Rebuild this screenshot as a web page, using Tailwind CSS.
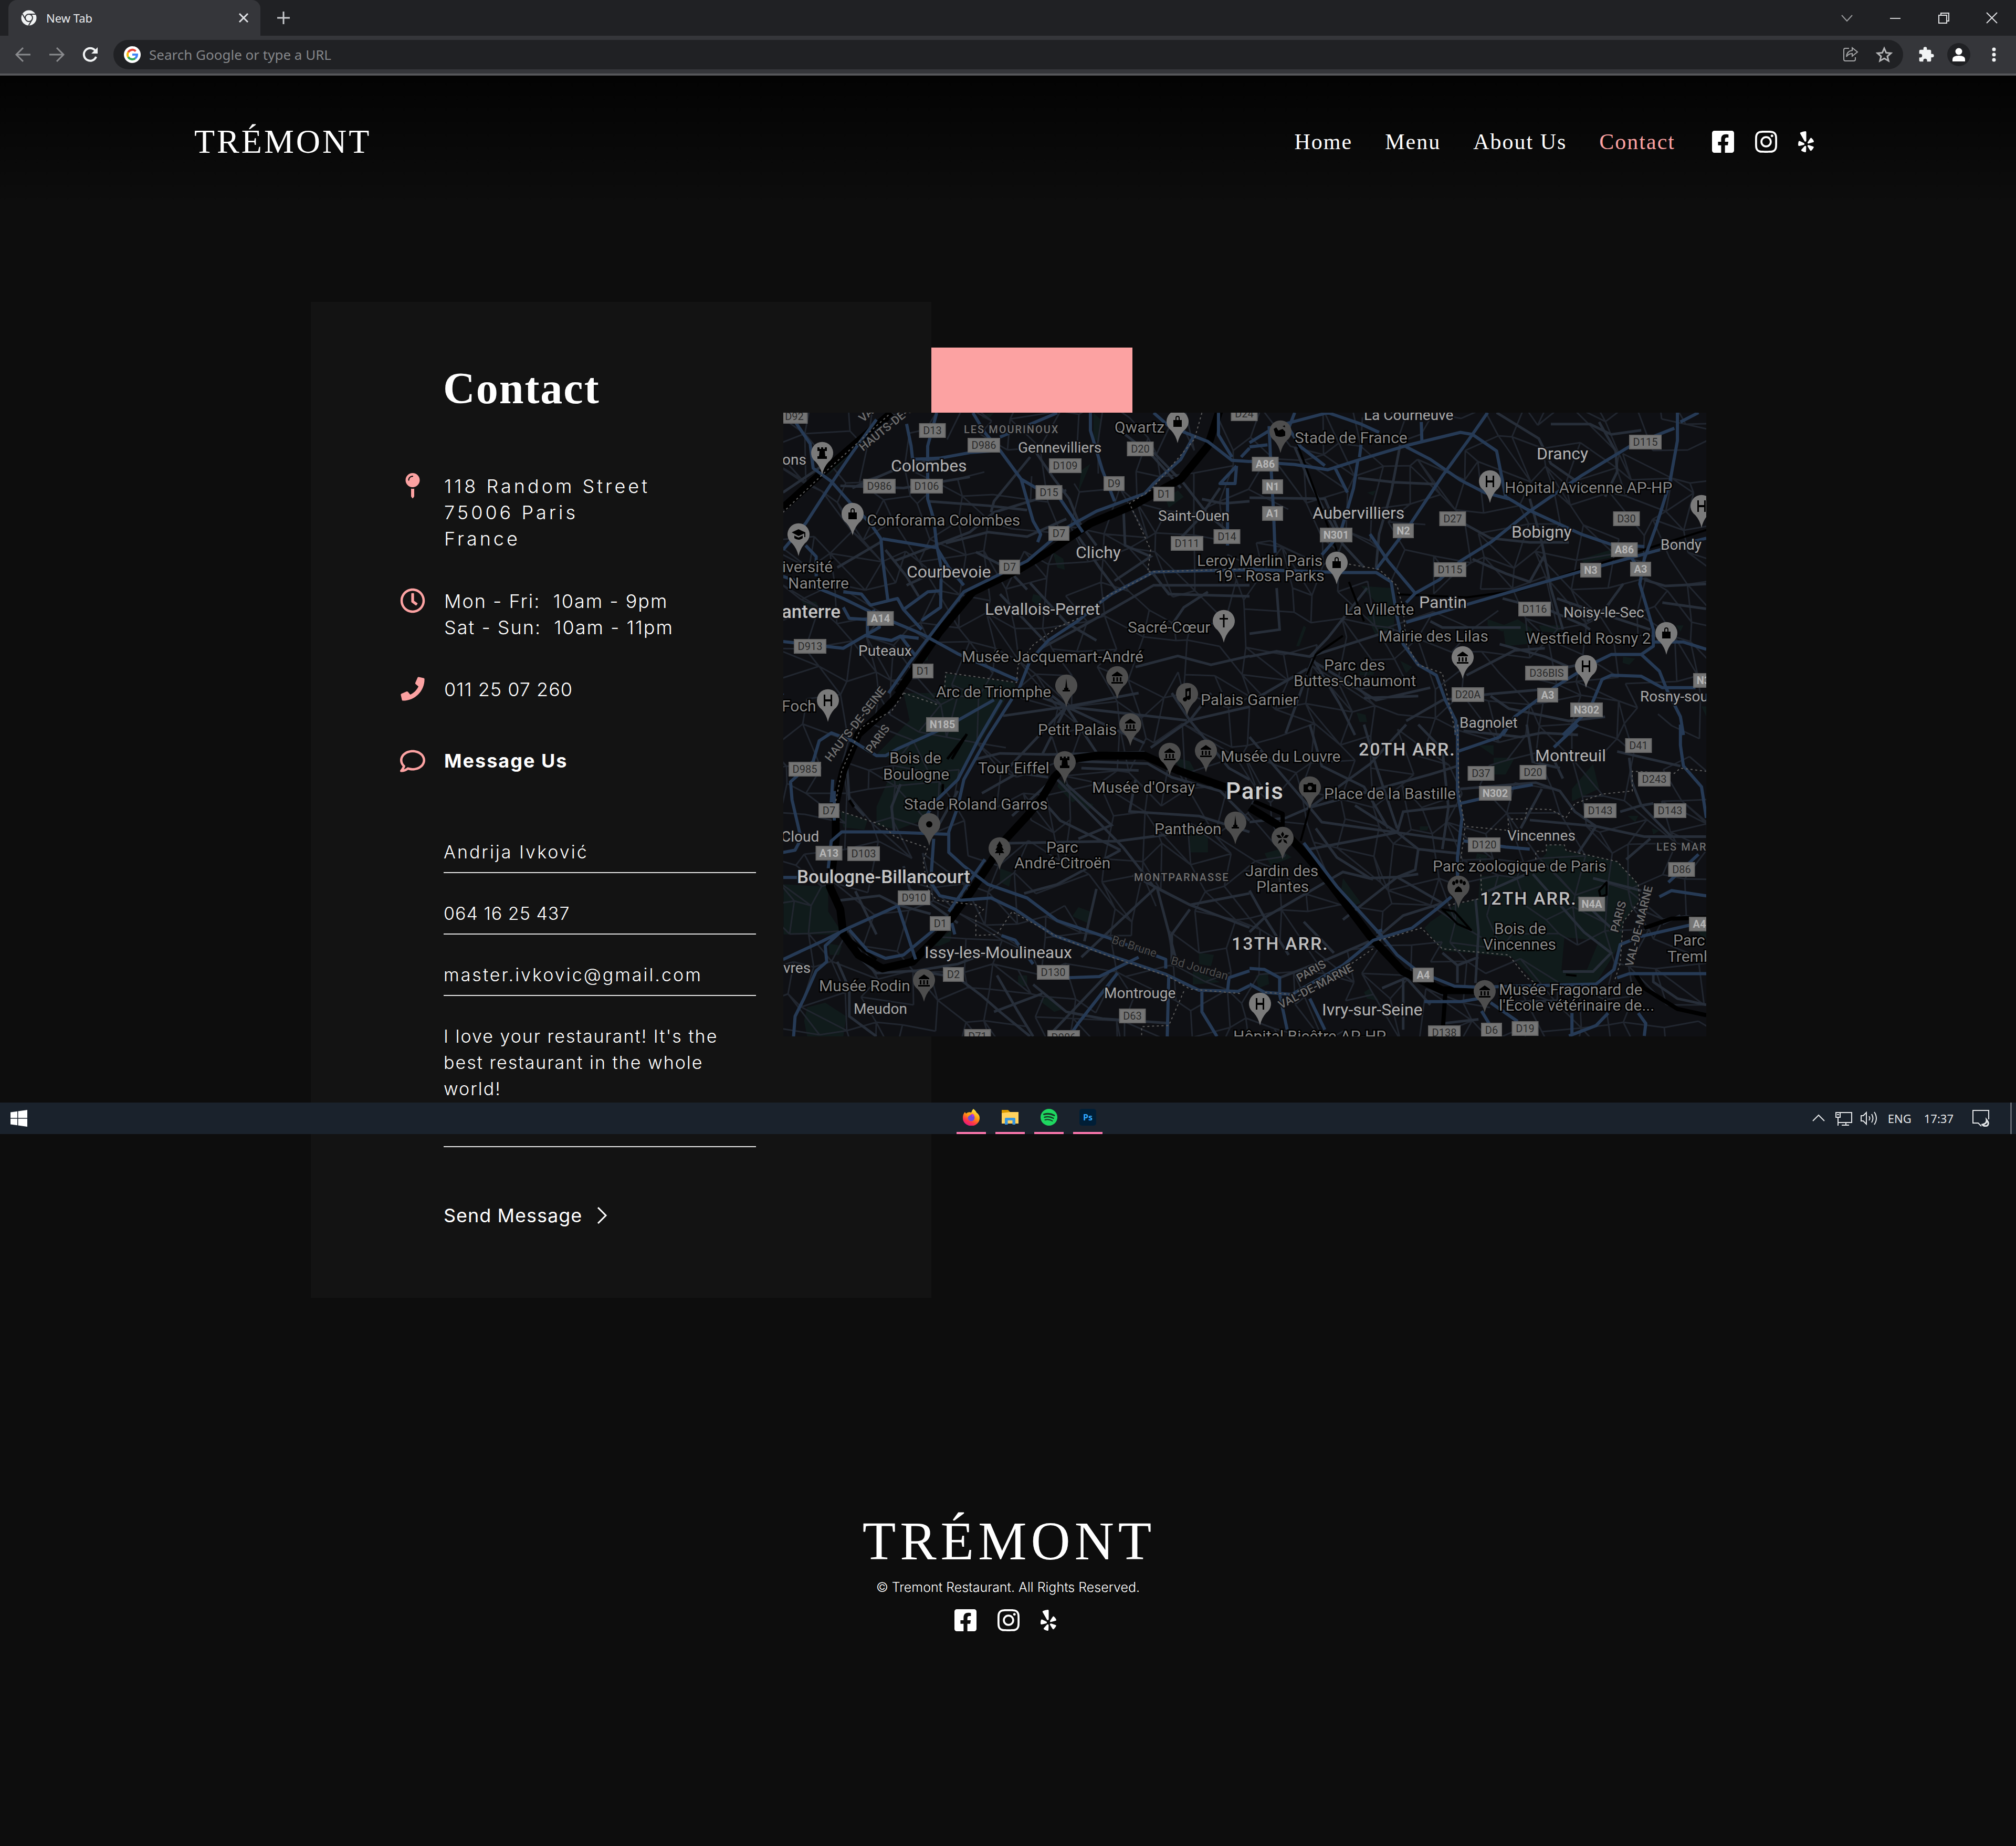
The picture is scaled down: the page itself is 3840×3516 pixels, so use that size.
<!DOCTYPE html>
<html lang="en">
<head>
<meta charset="utf-8">
<meta name="viewport" content="width=device-width, initial-scale=1">
<title>Trémont – Contact</title>
<script src="https://cdn.jsdelivr.net/npm/@tailwindcss/browser@4"></script>
</head>
<body class="relative min-h-screen bg-[#0d0d0d] text-white font-['Inter',sans-serif]">

<!-- shared icons -->
<svg class="hidden" aria-hidden="true">
  <symbol id="facebook" viewBox="0 32 448 448"><path d="M400 32H48A48 48 0 0 0 0 80v352a48 48 0 0 0 48 48h137.25V327.69h-63V256h63v-54.64c0-62.15 37-96.48 93.67-96.48 27.14 0 55.52 4.84 55.52 4.84v61h-31.27c-30.81 0-40.42 19.12-40.42 38.73V256h68.78l-11 71.69h-57.78V480H400a48 48 0 0 0 48-48V80a48 48 0 0 0-48-48z"/></symbol>
  <symbol id="instagram" viewBox="0 32 448 448"><path d="M224.1 141c-63.6 0-114.9 51.3-114.9 114.9s51.3 114.9 114.9 114.9S339 319.5 339 255.9 287.7 141 224.1 141zm0 189.6c-41.1 0-74.7-33.5-74.7-74.7s33.5-74.7 74.7-74.7 74.7 33.5 74.7 74.7-33.6 74.7-74.7 74.7zm146.4-194.3c0 14.9-12 26.8-26.8 26.8-14.9 0-26.8-12-26.8-26.8s12-26.8 26.8-26.8 26.8 12 26.8 26.8zm76.1 27.2c-1.7-35.9-9.9-67.7-36.2-93.9-26.2-26.2-58-34.4-93.9-36.2-37-2.1-147.9-2.1-184.9 0-35.8 1.7-67.6 9.9-93.9 36.1s-34.4 58-36.2 93.9c-2.1 37-2.1 147.9 0 184.9 1.7 35.9 9.9 67.7 36.2 93.9s58 34.4 93.9 36.2c37 2.1 147.9 2.1 184.9 0 35.9-1.7 67.7-9.9 93.9-36.2 26.2-26.2 34.4-58 36.2-93.9 2.1-37 2.1-147.8 0-184.8zM398.8 388c-7.8 19.6-22.9 34.7-42.6 42.6-29.5 11.7-99.5 9-132.1 9s-102.7 2.6-132.1-9c-19.6-7.8-34.7-22.9-42.6-42.6-11.7-29.5-9-99.5-9-132.1s-2.6-102.7 9-132.1c7.8-19.6 22.9-34.7 42.6-42.6 29.5-11.7 99.5-9 132.1-9s102.7-2.6 132.1 9c19.6 7.8 34.7 22.9 42.6 42.6 11.7 29.5 9 99.5 9 132.1s2.7 102.7-9 132.1z"/></symbol>
  <symbol id="yelp" viewBox="0 0 384 512"><path d="M42.9 240.32l99.62 48.61c19.2 9.4 16.2 37.51-4.5 42.71L30.5 358.45a22.79 22.79 0 0 1-28.21-19.6 197.16 197.16 0 0 1 9-85.32 22.8 22.8 0 0 1 31.61-13.21zm44 239.25a199.45 199.45 0 0 0 79.42 32.11A22.78 22.78 0 0 0 192.94 490l3.9-110.82c.7-21.3-25.5-31.91-39.81-16.1l-74.21 82.4a22.82 22.82 0 0 0 4.09 34.09zm145.34-109.92l58.81 94a22.93 22.93 0 0 0 34 5.5 198.36 198.36 0 0 0 52.71-67.61A23 23 0 0 0 364.17 370l-105.42-34.26c-20.31-6.5-37.81 15.8-26.51 33.91zm148.33-132.23a197.44 197.44 0 0 0-50.41-69.31 22.85 22.85 0 0 0-34 4.4l-62 91.92c-11.9 17.7 4.7 40.61 25.2 34.71L366 268.63a23 23 0 0 0 14.61-31.21zM62.11 30.18a22.86 22.86 0 0 0-9.9 32l104.12 180.44c11.7 20.2 42.61 11.9 42.61-11.4V22.88a22.67 22.67 0 0 0-24.5-22.8 320.37 320.37 0 0 0-112.33 30.1z"/></symbol>
</svg>

<!-- browser frame -->
<div class="font-['Noto_Sans',sans-serif] border-b-4 border-[#56575a] bg-[#35363a]">
  <div class="flex h-[68px] items-center bg-[#202124]">
    <div class="ml-4 flex h-full w-[480px] items-center rounded-t-[16px] bg-[#35363a] pl-6 pr-5">
      <svg class="h-[30px] w-[30px]" viewBox="0 0 30 30"><circle cx="15" cy="15" r="14.500" fill="#f1f3f4"/><g stroke="#35363a" stroke-width="2" fill="none"><circle cx="15" cy="15" r="7"/><path d="M15 8H28M9 18.500L2.500 7.500M21 18.500L14.500 29.500"/></g></svg>
      <span class="ml-[18px] text-[22px] leading-8 text-[#e8eaed]">New Tab</span>
      <button class="ml-auto" aria-label="Close tab"><svg class="h-6 w-6" viewBox="0 0 24 24" stroke="#dfe1e5" stroke-width="3"><path d="M4 4L20 20M20 4L4 20"/></svg></button>
    </div>
    <button class="ml-[30px]" aria-label="New tab"><svg class="h-7 w-7" viewBox="0 0 28 28" stroke="#c8cacd" stroke-width="3"><path d="M14 2V26M2 14H26"/></svg></button>
    <div class="ml-auto flex items-center gap-[68px] pr-[34px]">
      <button aria-label="Search tabs"><svg class="h-6 w-6" viewBox="0 0 24 24" fill="none" stroke="#9a9b9d" stroke-width="2"><path d="M2 7L12 18L22 7"/></svg></button>
      <button aria-label="Minimize"><svg class="h-6 w-6" viewBox="0 0 24 24" stroke="#cfd0d2" stroke-width="2"><path d="M2 13H22"/></svg></button>
      <button aria-label="Restore"><svg class="h-6 w-6" viewBox="0 0 24 24" fill="none" stroke="#e0e1e3" stroke-width="2"><path d="M3 7H18V22H3ZM7 7V3H22V18H18"/></svg></button>
      <button aria-label="Close window"><svg class="h-6 w-6" viewBox="0 0 24 24" stroke="#e0e1e3" stroke-width="2"><path d="M2 2L22 22M22 2L2 22"/></svg></button>
    </div>
  </div>
  <div class="flex h-[72px] items-center pl-7 pr-[23px]">
    <button aria-label="Back"><svg class="h-8 w-8" viewBox="0 0 32 32" fill="none" stroke="#8a8b8e" stroke-width="3"><path d="M30 16H4M16 3L3 16L16 29"/></svg></button>
    <button class="ml-8" aria-label="Forward"><svg class="h-8 w-8" viewBox="0 0 32 32" fill="none" stroke="#8a8b8e" stroke-width="3"><path d="M2 16H28M16 3L29 16L16 29"/></svg></button>
    <button class="ml-8" aria-label="Reload"><svg class="h-8 w-8" viewBox="0 0 32 32" fill="none" stroke="#f1f3f4" stroke-width="4"><path d="M27 20A12 12 0 1 1 25 8"/><path d="M30 2V14H18Z" fill="#f1f3f4" stroke="none"/></svg></button>
    <div class="ml-7 flex h-14 flex-1 items-center rounded-full bg-[#202124] pl-5 pr-5">
      <svg class="h-8 w-8 shrink-0" viewBox="0 0 32 32" fill="none" stroke-width="4"><circle cx="16" cy="16" r="16" fill="#fff"/><path d="M22.500 9.500A9 9 0 0 0 8.200 11.500" stroke="#ea4335"/><path d="M8.200 11.500A9 9 0 0 0 8.200 20.500" stroke="#fbbc05"/><path d="M8.200 20.500A9 9 0 0 0 21.500 23.100" stroke="#34a853"/><path d="M21.500 23.100A9 9 0 0 0 25 16H16" stroke="#4285f4"/></svg>
      <input class="ml-4 min-w-0 flex-1 bg-transparent text-[26px] leading-9 text-[#e8eaed] placeholder-[#85878a] outline-none" type="text" aria-label="Address" placeholder="Search Google or type a URL">
      <button aria-label="Share"><svg class="h-8 w-8" viewBox="0 0 32 32" fill="none" stroke="#a5a6a8" stroke-width="2"><path d="M13 4H6Q3 4 3 7V25Q3 28 6 28H22Q25 28 25 25V21"/><path d="M19 3L29 11L19 19V14Q12 14 8 20Q9 9 19 8Z"/></svg></button>
      <button class="ml-8" aria-label="Bookmark"><svg class="h-8 w-8" viewBox="0 0 32 32" fill="none" stroke="#b4b5b7" stroke-width="3"><path d="M16 4L19.700 12.500L29 13.200L22 19.300L24.200 28L16 23.300L7.800 28L10 19.300L3 13.200L12.300 12.500Z"/></svg></button>
    </div>
    <button class="ml-7" aria-label="Extensions"><svg class="h-8 w-8" viewBox="0 0 24 24" fill="#f1f3f4"><path d="M20.500 11H19V7a2 2 0 0 0-2-2h-4V3.500a2.500 2.500 0 0 0-5 0V5H4a2 2 0 0 0-2 2v3.800h1.500a2.700 2.700 0 0 1 0 5.400H2V20a2 2 0 0 0 2 2h3.800v-1.500a2.700 2.700 0 0 1 5.400 0V22H17a2 2 0 0 0 2-2v-4h1.500a2.500 2.500 0 0 0 0-5z"/></svg></button>
    <button class="ml-6" aria-label="Profile"><svg class="h-11 w-11" viewBox="0 0 44 44" fill="#fff"><circle cx="22" cy="22" r="22" fill="#202124"/><circle cx="22" cy="16" r="6.500"/><path d="M10 35V31Q10 24 22 24T34 31V35Z"/></svg></button>
    <button class="ml-8" aria-label="Browser menu"><svg class="h-8 w-8" viewBox="0 0 32 32" fill="#f1f3f4"><circle cx="13" cy="6" r="3.500"/><circle cx="13" cy="16" r="3.500"/><circle cx="13" cy="26" r="3.500"/></svg></button>
  </div>
</div>

<!-- site -->
<div class="bg-linear-to-b from-black/80 to-transparent to-[250px]">
  <header class="flex items-center justify-between pb-[273px] pl-[370px] pr-[385px] pt-[94px] font-['Liberation_Serif',serif]">
    <a href="#" class="text-[64px] leading-[64px] tracking-[4px]">TRÉMONT</a>
    <nav class="flex items-center gap-[62px] text-[42px] leading-10 tracking-[2px]">
      <a href="#">Home</a>
      <a href="#">Menu</a>
      <a href="#">About Us</a>
      <a href="#" class="text-[#fca2a2]">Contact</a>
      <div class="ml-2 flex items-center gap-10">
        <a href="#" aria-label="Facebook"><svg class="size-[42px] fill-white"><use href="#facebook"/></svg></a>
        <a href="#" aria-label="Instagram"><svg class="size-[42px] fill-white"><use href="#instagram"/></svg></a>
        <a href="#" aria-label="Yelp"><svg class="h-10 w-[30px] fill-white"><use href="#yelp"/></svg></a>
      </div>
    </nav>
  </header>

  <main class="grid grid-cols-[592fr_900fr_282fr_1476fr_590fr]">
    <section class="col-span-2 col-start-2 row-start-1 min-w-0 bg-[#131313] pb-[132px] pl-[170px] pt-[123px]">
      <h1 class="pl-[82px] font-['Liberation_Serif',serif] text-[84px] font-bold leading-[84px] tracking-[2px]">Contact</h1>
      <div class="mt-[119px] flex flex-col text-[36px] font-light leading-[50px]">
        <div class="flex gap-9">
          <svg class="h-12 w-12 fill-[#fca2a2]" viewBox="-112 0 512 512"><path d="M112 316.940v156.690l22.020 33.020c4.750 7.120 15.220 7.120 19.970 0L176 473.630V316.940c-10.390 1.920-21.060 3.060-32 3.060s-21.610-1.140-32-3.060zM144 0C64.470 0 0 64.470 0 144s64.470 144 144 144 144-64.470 144-144S223.530 0 144 0zm0 76c-37.500 0-68 30.500-68 68 0 6.620-5.380 12-12 12s-12-5.380-12-12c0-50.730 41.280-92 92-92 6.620 0 12 5.380 12 12s-5.380 12-12 12z"/></svg>
          <address class="not-italic tracking-[5px]">118 Random Street<br>75006 Paris<br>France</address>
        </div>
        <div class="mt-[69px] flex gap-9">
          <svg class="h-12 w-12 fill-[#fca2a2]" viewBox="0 0 512 512"><path d="M256 8C119 8 8 119 8 256s111 248 248 248 248-111 248-248S393 8 256 8zm0 448c-110.500 0-200-89.500-200-200S145.500 56 256 56s200 89.500 200 200-89.500 200-200 200zm61.800-104.400l-84.900-61.700c-3.100-2.300-4.900-5.900-4.900-9.700V116c0-6.600 5.400-12 12-12h32c6.600 0 12 5.400 12 12v141.700l66.800 48.600c5.400 3.900 6.500 11.400 2.600 16.800L334.600 349c-3.900 5.300-11.400 6.500-16.800 2.600z"/></svg>
          <p class="whitespace-pre tracking-[2px]">Mon - Fri:  10am - 9pm
Sat - Sun:  10am - 11pm</p>
        </div>
        <div class="mt-[68px] flex gap-9">
          <svg class="h-12 w-12 fill-[#fca2a2]" viewBox="-16 -16 544 544"><path d="M493.400 24.600l-104-24c-11.300-2.600-22.900 3.300-27.500 13.900l-48 112c-4.200 9.800-1.400 21.300 6.900 28l60.600 49.600c-36 76.700-98.900 140.500-177.200 177.200l-49.600-60.600c-6.800-8.300-18.200-11.100-28-6.900l-112 48C3.900 366.500-2 378.100.6 389.400l24 104C27.100 504.200 36.700 512 48 512c256.100 0 464-207.500 464-464 0-11.200-7.700-20.900-18.600-23.400z"/></svg>
          <a href="tel:0112507260" class="tracking-[1px]">011 25 07 260</a>
        </div>
        <div class="mt-[86px] flex gap-9">
          <svg class="h-12 w-12 fill-[#fca2a2]" viewBox="0 -16 512 512"><path d="M256 32C114.600 32 0 125.100 0 240c0 47.600 19.900 91.200 52.900 126.300C38 405.700 7 439.100 6.500 439.500c-6.600 7-8.400 17.200-4.600 26S14.400 480 24 480c61.500 0 110-25.700 139.100-46.300C192 442.800 223.200 448 256 448c141.400 0 256-93.100 256-208S397.400 32 256 32zm0 368c-26.700 0-53.100-4.100-78.400-12.100l-22.700-7.200-19.500 13.800c-14.300 10.100-33.900 21.400-57.500 29 7.300-12.100 14.400-25.700 19.900-40.200l10.600-28.100-20.600-21.800C69.700 314.100 48 282.200 48 240c0-88.200 93.300-160 208-160s208 71.800 208 160-93.300 160-208 160z"/></svg>
          <h2 class="font-bold tracking-[2px]">Message Us</h2>
        </div>
      </div>
      <form class="ml-[83px] mt-[124px] flex max-w-[595px] flex-col text-[34px] font-light leading-[50px]">
        <input class="mb-[52px] w-full border-b-2 border-[#e6e6e6] bg-transparent pb-[13px] tracking-[3px] outline-none" type="text" aria-label="Name" value="Andrija Ivković">
        <input class="mb-[52px] w-full border-b-2 border-[#e6e6e6] bg-transparent pb-[13px] tracking-[1px] outline-none" type="tel" aria-label="Phone" value="064 16 25 437">
        <input class="mb-[52px] w-full border-b-2 border-[#e6e6e6] bg-transparent pb-[13px] tracking-[3px] outline-none" type="email" aria-label="Email" value="master.ivkovic@gmail.com">
        <textarea class="h-[236px] w-full resize-none overflow-hidden border-b-2 border-[#e6e6e6] bg-transparent pr-16 tracking-[2px] outline-none" aria-label="Message">I love your restaurant! It's the best restaurant in the whole world!</textarea>
        <button type="button" class="mt-[105px] flex items-center gap-7 self-start text-[36px] font-normal leading-[50px] tracking-[1px]">Send Message
          <svg class="h-8 w-5" viewBox="0 0 20 32" fill="none" stroke="#fff" stroke-width="3"><path d="M2 1L17 16L2 31"/></svg></button>
      </form>
    </section>

    <div class="col-span-2 col-start-3 row-start-1 mt-[87px] min-w-0">
      <div class="ml-[282px] h-[124px] w-[383px] bg-[#fca2a2]"></div>
      <svg id="map" class="block w-full bg-[#0f1014]" viewBox="0 0 1758 1188" role="img" aria-label="Map of Paris">
        <g id="parks" class="fill-[#101b1b]">
          <g transform="translate(-12 -126) scale(.574 .421)"><path d="M1050 300L1075 330L1070 430L1050 420ZM380 310L320 360L160 590L180 570ZM80 1150L130 1155L160 1230L100 1190ZM1290 690L1330 650L1350 680L1300 730ZM915 930L950 960L955 1010L930 1000ZM560 1480L790 1520L790 1568L550 1568ZM1010 560L1040 530L1000 660ZM850 1120L880 1130L870 1180L845 1150ZM480 1380L500 1360L500 1420L470 1430ZM680 310L720 300L700 330L680 325Z"/></g>
          <g transform="translate(888 -6) scale(.574 .3954)"><path d="M370 850L470 860L480 990L480 1050L420 1090L390 1000L420 930ZM840 1040L890 1010L940 1060L920 1130L850 1140ZM960 1040L1030 1040L1030 1075L970 1070ZM1100 720L1200 675L1210 710L1110 740ZM500 1210L540 1240L520 1270ZM155 1140L180 1040L188 1050L165 1140ZM355 1460L385 1470L390 1505L365 1505ZM790 1010L850 1040L840 1070L790 1040ZM390 400L420 390L410 415ZM1240 1190L1280 1200L1260 1230L1238 1220ZM370 1240L420 1250L410 1280L365 1280ZM1415 1040L1440 1040L1430 1070ZM1500 1430L1516 1430L1516 1480Z"/></g>
          <g transform="translate(-12 534) scale(.574 .4337)"><path d="M420 0L770 0L600 380L530 470L480 560L400 600L330 580L330 500L370 380L410 300L330 270L360 230L440 120ZM210 520L300 560L290 600L220 590ZM22 840L170 850L170 960L220 1060L22 1060ZM100 1380L160 1360L230 1420L220 1508L100 1508L90 1440ZM1370 610L1430 620L1430 700L1370 700ZM940 380L1010 460L980 480L930 410ZM990 450L1050 490L1030 520ZM740 770L780 790L770 850L740 830ZM1000 940L1040 960L1030 1010L980 980ZM800 1240L830 1240L830 1290L800 1280ZM580 1040L575 1090L540 1110L510 1110ZM170 1100L215 1110L205 1150L175 1150ZM1310 280L1370 300L1390 350L1350 350ZM1380 1210L1470 1270L1380 1280ZM1400 1140L1450 1150L1440 1200L1400 1190ZM870 1350L910 1330L945 1390L920 1400Z"/></g>
          <g transform="translate(888 594) scale(.574 .3954)"><path d="M985 580L1040 580L1050 610L1220 660L1290 770L1290 850L1240 950L1230 1060L1150 1245L950 1245L870 1120L740 1100L640 1090L580 980L600 950L680 870L760 840L765 730L920 720L985 620ZM1140 190L1160 310L1070 370L1070 310ZM810 160L880 160L850 240L810 240ZM50 620L100 600L140 640L70 680ZM310 740L370 860L350 870L305 790ZM380 1290L400 1270L430 1330L390 1320ZM760 100L810 100L810 150ZM20 1210L60 1190L65 1250L30 1270ZM565 490L595 490L590 510L565 510ZM1255 440L1290 440L1280 470ZM1335 500L1360 510L1340 530ZM755 620L790 630L785 660L750 650ZM1480 940L1516 960L1516 1060L1490 1000Z"/><path class="fill-[#0f1014]" d="M1045 1025L1160 1040L1120 1180L1035 1185Z"/></g>
        </g>
        <path id="streets" class="fill-none stroke-[#21262f] stroke-[3px]"/>
        <g class="fill-none stroke-[#272e39] stroke-[5px] [&_path]:[vector-effect:non-scaling-stroke]">
          <g transform="translate(-12 -126) scale(.574 .421)"><path d="M20 660L150 540M210 630L420 640L640 590M250 640L420 540L560 500M500 700L700 720L830 740M560 890L700 840L830 860L960 780M390 970L640 840L720 750L960 650M200 1000L300 920L350 880M360 920L430 1040L470 1130M430 1080L540 1010M1150 740L1155 900L1240 950L1120 1060M1000 860L1070 1000L1130 1110M840 1070L960 1250L1060 1330M1568 1080L1250 1080L1020 1260L870 1370M1250 1030L1300 1120L1568 1130M1430 1110L1350 1180L1310 1260M1190 1450L1330 1400L1440 1440L1568 1400M740 1120L900 1350M660 930L760 1000L830 1100M1250 480L1350 620L1430 760L1490 830M860 480L920 600L970 690L1000 790L1060 900M1568 700L1480 710L1410 690M1330 880L1400 780L1470 640M840 500L720 700L710 750M1340 640L1250 500L1120 360"/></g>
          <g transform="translate(888 -6) scale(.574 .3954)"><path d="M150 180L200 350L260 520L310 650L380 760M0 425L250 430L300 600M500 170L470 400L430 600L420 760M360 330L480 350L620 360M700 540L800 620L930 640L1060 640M930 430L970 640L1000 860L1040 1060M1160 60L1215 200L1220 300L1180 420M1000 70L1130 70L1200 120L1300 100M820 15L960 140L1000 260L1120 380M1240 840L1180 960L1120 1020M740 720L850 790L930 830L980 700M1020 910L1140 970L1330 1060M840 910L1000 970L1110 1040L1130 1060M0 1190L90 1165L200 1190L260 1100L390 860M200 1190L480 1060M210 1200L120 1560M210 1200L300 1420L350 1568M220 1220L420 1400L600 1340M190 1250L0 1410M520 1500L640 1400L800 1370L960 1350M720 1280L880 1160L980 1150M830 1130L980 1190L1060 1240L1120 1220M800 1380L860 1440L1060 1500L1180 1480M600 1020L640 1050L900 1050M380 1390L560 1380M0 1080L100 1060L90 860M1370 930L1515 960M1310 820L1380 850L1515 840"/></g>
          <g transform="translate(-12 534) scale(.574 .4337)"><path d="M960 60L750 100M960 60L760 340M960 60L880 270M960 60L1060 260M960 60L1220 220M960 60L1360 120M960 60L1200 0M960 60L840 0M960 60L900 0M660 290L740 265L900 270L1220 260M930 380L1150 680L1250 850L1370 930L1568 1030M900 500L940 560L1140 690M960 400L1110 580L1000 640M780 540L940 350M750 660L1130 650L1420 600M1260 850L1010 1160M1260 850L1330 1200M1180 800L1370 930L1568 880M1140 690L930 840L820 880M1190 380L1170 520L1400 540L1568 610M1000 300L1230 310L1310 370L1470 430L1568 560M1010 330L1200 340M1370 120L1240 240M1370 120L1500 330L1568 380M1370 120L1440 0M1370 120L1310 0M1370 120L1568 60M410 400L380 500L390 620M230 270L240 470L290 540M210 910L340 890L400 930L510 970M260 870L330 1060M420 760L440 860L600 1010M280 1170L330 1230L460 1220L600 1190L700 1140M510 1230L600 1250L680 1330L740 1400L840 1508M730 1240L800 1400L850 1508M850 1280L960 1400L1080 1430L1300 1450M1370 950L1310 1060L1310 1200M1060 860L1020 1090M600 430L520 620M680 440L800 350L900 370M900 1508L1100 1230M720 1400L880 1320M200 1180L240 1300L240 1420L330 1508"/></g>
          <g transform="translate(888 594) scale(.574 .3954)"><path d="M490 520L200 600M490 520L350 390M490 520L510 420L690 390M490 520L690 560M490 520L560 600L550 700L490 735M490 520L240 470L200 400M200 400L400 190L520 0M200 400L0 60M200 400L600 240L690 200M200 400L120 450L0 470M220 500L290 640L400 740L490 735L560 720M490 735L310 940M490 735L640 860M560 600L690 620M200 0L240 200L380 300L460 500M380 0L420 200L490 500M560 0L640 120L660 400L640 600M0 1000L50 930L310 710L410 745M50 930L130 1110M50 930L0 800M180 950L280 1100M420 1030L510 920L640 860M420 1030L260 1130L100 1220M640 1100L690 1160L690 1245M690 1160L760 1120M750 840L760 1000L750 1245M780 810L920 720M940 720L1110 1000L1200 1100L1140 1190L1040 1190M1090 830L1200 980M1140 740L1300 800M700 310L950 280L1030 320L1080 420L1150 490L1310 540L1515 540M920 0L940 180L1030 210M1260 160L1270 280L1300 390L1400 540M1150 490L1090 620M1150 490L930 460M970 310L900 500M710 30L900 60L970 40L1090 50M1220 130L1430 200M1230 420L1300 390L1340 380M1330 550L1250 650M1430 920L1370 960M1340 1200L1340 1240L1420 1320L1515 1350M440 1270L520 1220L600 1350M510 1220L510 1470M640 1440L760 1420M830 1340L1040 1330L1140 1370M1040 260L1010 170L950 140"/></g>
        </g>
        <g class="fill-none stroke-black stroke-[15px] [stroke-linejoin:round] [&_path]:[vector-effect:non-scaling-stroke]">
          <g transform="translate(-12 -126) scale(.574 .421)"><path d="M380 300L150 570L20 730M1468 290L1430 450L1340 600L1180 720L1040 800L900 930L800 1010L650 1110L540 1290L480 1410L400 1568"/></g>
          <g transform="translate(-12 534) scale(.574 .4337)"><path d="M410 0L330 110L270 180L220 340L195 480L195 640L185 750L175 850L210 950L220 1060L270 1150L350 1210L450 1180L540 1060L600 950L640 880L690 780L760 640L830 540L880 460L920 370L980 290L1060 275L1220 275L1330 340L1480 410L1568 440"/><path class="stroke-[5px]" d="M630 180L580 290M565 290L625 190M550 400L550 440M240 470L255 500M240 1080L330 1170"/></g>
          <g transform="translate(888 594) scale(.574 .3954)"><path d="M0 400L90 480L170 600L270 770L400 1020L510 1190L640 1280L780 1280"/><path class="stroke-[8px]" d="M650 1290L640 1500M1310 980L1400 935L1516 930M1280 1200L1310 1270L1420 1370L1516 1400M15 370L110 430L110 490"/><path class="stroke-[4px]" d="M200 400L170 560M640 890L680 900L735 990L690 960ZM1185 760L1160 800L1165 830L1185 820ZM1050 1205L1085 1210"/></g>
          <g transform="translate(888 -6) scale(.574 .3954)"><path class="stroke-[4px]" d="M490 890L720 905L900 870L1080 780L1516 580M310 1090L220 1180L190 1280M330 830L380 1020M160 170L290 680"/></g>
        </g>
        <g class="fill-none stroke-[#263a55] stroke-[6px] [stroke-linejoin:round] [&_path]:[vector-effect:non-scaling-stroke]">
          <g transform="translate(-12 -126) scale(.574 .421)"><path d="M60 340L110 440L120 550L180 610L245 710L310 800L345 870L350 960L368 1150M330 330L250 480L190 600L95 800L20 920M430 350L445 450L450 510L540 505L640 480L740 470L810 600L860 640M740 470L690 390L650 300M740 410L930 300M530 300L500 450L500 690L520 780L530 900L545 1000L543 1180L480 1240M350 870L530 910L570 1000L620 1080M810 600L850 790L875 850L865 885M1040 300L1040 380L1080 560L1120 700M1385 400L1340 510L1250 620L1220 665L1060 745L960 820L830 970L620 1110L540 1250L440 1430L370 1568M1250 300L1300 360L1430 430L1510 515L1568 520M1465 300L1465 400L1510 500M1568 460L1540 500M1525 540L1520 620L1470 620L1525 540M20 1335L220 1365L340 1270L320 1190M20 1040L130 1090L220 1140L340 1220L480 1300L600 1390L700 1450L800 1510M220 1110L280 1120L310 1170L400 1140L420 1190L480 1280M420 1190L500 1110L540 1105M220 1180L240 1230L300 1235L300 1310L380 1330L410 1310L470 1320M1568 1010L1400 1015L1250 1020L1110 1120L1060 1170L1000 1240L900 1330L840 1420L800 1560M940 690L1015 840M1495 640L1495 900M410 1310L460 1400M95 900L130 950L130 1040"/></g>
          <g transform="translate(888 -6) scale(.574 .3954)"><path d="M0 250L150 265L260 290L380 235L530 170L700 110L740 120L820 200L850 420L920 480L1100 600L1200 650L1310 660M260 15L370 70L430 110M520 180L600 240L700 340L780 400L860 430M65 80L70 240L80 500L85 690M790 15L730 140L640 320L530 560L420 770M1516 620L1350 680L1100 780L720 940L520 1025M1490 15L1430 60M1420 15L1420 150L1395 350L1350 560L1310 720L1295 840L1340 1060L1340 1140L1300 1180L1200 1180L1130 1230L1010 1340L880 1480L840 1568M1410 90L1270 170L1100 320L930 490L800 640L700 730L630 820L550 885L520 930M550 885L460 730L400 600M0 770L300 785L420 785L470 830L490 1000L510 1130L560 1230L620 1280L650 1400L685 1500L685 1568M360 240L345 380L325 480L300 600L240 700M285 285L325 400M370 170L365 230M0 180L60 170M0 160L90 80L260 15M150 15L130 90L170 180L250 270M570 60L572 150M1300 1180L1360 1260L1385 1350L1430 1480L1440 1568M1040 1568L1130 1440L1170 1300L1200 1280L1300 1285L1370 1340L1480 1340M1340 1120L1440 1120L1516 1155M1260 700L1290 760"/></g>
          <g transform="translate(-12 534) scale(.574 .4337)"><path d="M20 1170L150 1090L240 1030L400 935M20 700L60 690L80 640L50 470L45 390L120 300L140 210L180 175L250 210L330 275L360 275L400 245L560 150L720 30M780 25L700 190L620 380L600 500L570 610L570 700L620 760L700 840L830 900L930 1000L1100 1075L1290 1170L1290 1210M745 30L670 200L600 380L530 470L495 540M170 770L180 650L215 610L350 610L570 620M520 640L510 830L540 890L610 910L710 900L790 950L920 1065L1100 1150L1290 1235L1400 1305L1530 1310L1568 1285M400 930L460 1170M530 1030L420 1150L360 1165L300 1130L240 1040M210 1050L160 1110L165 1180L130 1220L90 1340L60 1420L55 1508M570 960L690 730M590 1060L580 1010M745 1065L790 1085L850 1190M970 1250L1070 1245L1200 1160M1130 1230L1000 1450L970 1508M1300 1240L1295 1508M1410 1310L1410 1400L1460 1508M1568 1220L1500 1250L1495 1310M20 810L80 810M20 0L0 30M185 380L180 480M190 430L190 560"/></g>
          <g transform="translate(888 594) scale(.574 .3954)"><path d="M690 0L690 200L690 330L705 450L690 640L690 730M0 1175L50 1180L100 1220L100 1290M0 1250L50 1290L140 1300L310 1160L410 1040L540 980L620 890L670 830M440 1020L490 1110L560 1190L680 1260L760 1265L1150 1250L1210 1180L1230 1060L1300 1020L1450 970L1516 950M690 130L740 105L830 60L850 20M700 380L790 350L860 310L940 290M710 560L850 590L930 600M1090 0L1010 110M1430 0L1430 100L1440 200L1500 300L1516 450M580 1335L700 1335L800 1310M770 1380L795 1440M800 1340L890 1430M1070 1390L1070 1500M1060 1500L1150 1450L1190 1390M1290 1390L1315 1440L1310 1500M200 1320L250 1470M100 1300L125 1470M180 570L290 780L440 1020M1490 625L1390 760M1360 830L1400 800L1516 825M1220 1220L1260 1200L1516 1200M420 1000L440 990"/></g>
        </g>
        <g class="fill-none stroke-[#5c5c5c] stroke-[2px] [stroke-dasharray:4_5] [&_path]:[vector-effect:non-scaling-stroke]">
          <g transform="translate(-12 -126) scale(.574 .421)"><path d="M370 310L150 580L20 750M1410 300L1385 420L1240 650L1170 710L1240 920L1230 1020L1568 1005M1240 1030L1080 1140L1060 1190M1000 1230L930 1270L850 1350L800 1440L795 1520L560 1475L555 1568"/></g>
          <g transform="translate(888 -6) scale(.574 .3954)"><path d="M330 745L430 770L490 850L510 960L520 1130L560 1230L640 1270L685 1568"/></g>
          <g transform="translate(-12 534) scale(.574 .4337)"><path d="M420 0L380 80L280 150L215 340L190 510L350 580L390 630L500 680L485 740L500 860L530 910L660 930L685 950L660 980L660 1065L730 1060L780 960L930 1070L1100 1155L1300 1245L1370 1300L1540 1320M1350 1310L1300 1460L1210 1465L1210 1508M420 0L530 50"/></g>
          <g transform="translate(888 594) scale(.574 .3954)"><path d="M690 0L695 330L715 490L860 510L858 455L915 455L920 405L1000 410L1050 450L1080 380L1170 335L1270 320L1270 225L1410 235L1430 210L1515 225M715 500L700 660M950 650L950 610L985 610L985 580L1045 580L1050 605L1220 660L1290 770L1295 850L1240 950L1230 1150L1210 1240M770 800L765 640M660 870L760 840M410 1080L320 1170L140 1300L50 1290M430 1040L570 980L640 1080L860 1110L920 1220L950 1245"/></g>
        </g>
        <g id="shields"></g>
        <g id="pins"></g>
        <g id="labels"></g>
      </svg>
    </div>
  </main>

  <footer class="flex flex-col items-center pt-[411px]">
    <a href="#" class="pl-1 font-['Liberation_Serif',serif] text-[104px] leading-[104px] tracking-[8px]">TRÉMONT</a>
    <p class="mt-5 text-[25px] font-light leading-8">© Tremont Restaurant. All Rights Reserved.</p>
    <div class="mt-[26px] flex items-center gap-10 pr-2.5">
      <a href="#" aria-label="Facebook"><svg class="size-[42px] fill-white"><use href="#facebook"/></svg></a>
      <a href="#" aria-label="Instagram"><svg class="size-[42px] fill-white"><use href="#instagram"/></svg></a>
      <a href="#" aria-label="Yelp"><svg class="h-10 w-[30px] fill-white"><use href="#yelp"/></svg></a>
    </div>
  </footer>
</div>

<!-- taskbar floats over the page -->
<div class="absolute inset-x-0 top-[2100px] grid h-[60px] grid-cols-[1fr_auto_1fr] bg-[#1a222c] font-['Noto_Sans',sans-serif] text-[22px] text-[#e4e6e8]">
  <button class="ml-5 justify-self-start" aria-label="Start"><svg class="h-8 w-8" viewBox="0 0 32 32" fill="#fff"><path d="M0 4.500L13 2.700V15.300H0ZM14.500 2.500L32 0V15.300H14.500ZM0 16.700H13V29.300L0 27.500ZM14.500 16.700H32V32L14.500 29.500Z"/></svg></button>
  <div class="flex gap-[18px] pl-[82px]">
    <button class="flex w-14 items-center justify-center border-b-4 border-[#ff78b0]" aria-label="Firefox"><svg class="h-8 w-8" viewBox="0 0 32 32"><defs><linearGradient id="fox" x1=".8" y1="0" x2=".3" y2="1"><stop offset="0" stop-color="#fff44f"/><stop offset=".45" stop-color="#ff980e"/><stop offset=".75" stop-color="#ff3647"/><stop offset="1" stop-color="#e31587"/></linearGradient></defs><path d="M20 0Q25 4 26 7Q32 11 32 18A16 15 0 0 1 0 17Q0 10 4 6L6 9Q10 5 16 7Q17 3 20 0Z" fill="url(#fox)"/><circle cx="16" cy="17" r="6.500" fill="#7049d8"/><path d="M8 12Q12 8 17 9L20 8Q16 12 12 13Q9 15 9 17Z" fill="#ff980e"/><path d="M16 10Q21 9 22 14L18 15Z" fill="#b833e1"/></svg></button>
    <button class="flex w-14 items-center justify-center border-b-4 border-[#ff78b0]" aria-label="File Explorer"><svg class="h-8 w-8" viewBox="0 0 32 32"><path d="M0 2H12L16 6V12H0Z" fill="#dc9a00"/><path d="M0 8L16 6H32V28H0Z" fill="#ffd25e"/><path d="M6 30V19Q6 17 8 17H24Q26 17 26 19V30H20.500V22H11.500V30Z" fill="#3a96dd"/></svg></button>
    <button class="flex w-14 items-center justify-center border-b-4 border-[#ff78b0]" aria-label="Spotify"><svg class="h-8 w-8" viewBox="0 0 32 32" fill="none" stroke="#173524" stroke-linecap="round"><circle cx="16" cy="16" r="16" fill="#1ed760" stroke="none"/><path d="M6.500 10.500Q17 7.500 26 12.500" stroke-width="3"/><path d="M7.500 16Q16.500 13.500 24.500 18" stroke-width="2.500"/><path d="M8.500 21Q16 19 22.500 23" stroke-width="2"/></svg></button>
    <button class="flex w-14 items-center justify-center border-b-4 border-[#ff78b0]" aria-label="Photoshop"><span class="flex h-8 w-8 items-center justify-center rounded-[5px] bg-[#001e36] text-[16px] font-bold leading-8 text-[#31a8ff]">Ps</span></button>
  </div>
  <div class="flex items-center justify-self-end">
    <svg class="h-6 w-6" viewBox="0 0 24 24" fill="none" stroke="#e4e6e8" stroke-width="2"><path d="M1 17L12 6L23 17"/></svg>
    <svg class="ml-5 h-8 w-8" viewBox="0 0 32 32" fill="none" stroke="#e4e6e8" stroke-width="2"><path d="M10 5H31V24H6M1 5H9V14H1ZM5 14V30M20 24V29M12 29H26M3 9H7"/></svg>
    <svg class="ml-4 h-8 w-8" viewBox="0 0 32 32" fill="none" stroke="#e4e6e8" stroke-width="2"><path d="M1 11H5L11 5V27L5 21H1ZM16 12Q19 16 16 20M21 8Q26 16 21 24M26 4Q34 16 26 28"/></svg>
    <span class="ml-5 leading-8">ENG</span>
    <span class="ml-6 leading-8">17:37</span>
    <svg class="ml-9 h-8 w-8" viewBox="0 0 32 32" fill="none" stroke="#e4e6e8" stroke-width="2"><path d="M31 18V1H1V25H11L17 31"/><path d="M27 19Q28 26 19 28Q22 32 28 30Q33 26 27 19Z" stroke-width="3"/></svg>
    <span class="ml-10 mr-2 h-[60px] w-[3px] bg-[#5f666e]"></span>
  </div>
</div>

<script>
const NS = 'http://www.w3.org/2000/svg';
const add = (parent, tag, attrs, text) => {
  const el = document.createElementNS(NS, tag);
  for (const k in attrs) el.setAttribute(k, attrs[k]);
  if (text) el.textContent = text;
  parent.appendChild(el);
  return el;
};

// side streets: a jittered lattice from a fixed seed
let seed = 41;
const rnd = () => (seed = (seed * 16807) % 2147483647) / 2147483647;
const step = 56, cols = 34, rows = 24, nodes = [];
for (let r = 0; r < rows; r++) for (let c = 0; c < cols; c++)
  nodes.push([Math.round((c - 1) * step + (rnd() - .5) * 50), Math.round((r - 1) * step + (rnd() - .5) * 50)]);
let d = '';
for (let r = 0; r < rows - 1; r++) for (let c = 0; c < cols - 1; c++) {
  const a = nodes[r * cols + c];
  const link = (b) => { d += `M${a}L${b}`; };
  if (rnd() < .72) link(nodes[r * cols + c + 1]);
  if (rnd() < .72) link(nodes[(r + 1) * cols + c]);
  if (rnd() < .3) link(nodes[(r + 1) * cols + c + 1]);
}
document.getElementById('streets').setAttribute('d', d);

// road shields: text, centre x, centre y
const shields = [
  ['D92',21,7],['D13',284,34],['D986',382,62],['D20',680,69],['D109',537,101],['D986',183,140],['D106',273,140],['D9',630,135],['D15',506,152],['D1',725,155],['D7',525,230],['D14',845,236],['D111',769,249],['D7',431,294],['A14',185,392],['D913',51,445],['D1',266,492],['D24',878,2],
  ['N185',303,594],['D985',41,679],['D7',87,758],['A13',87,839],['D103',153,840],['D910',249,924],['D1',299,973],['D2',324,1070],['D130',514,1066],['D63',665,1149],['D71',370,1188],['D906',534,1190],
  ['A86',918,98],['N1',932,141],['A1',932,192],['N301',1053,233],['N2',1181,225],['D27',1275,202],['D30',1606,202],['D115',1642,56],['A86',1602,261],['A3',1633,298],['N3',1538,300],['D115',1270,299],['D116',1431,374],['D36BIS',1454,496],['A3',1456,538],['D20A',1304,537],['N302',1530,566],['N302',1764,510],
  ['D41',1629,634],['D37',1329,687],['D20',1428,685],['D243',1659,698],['N302',1356,725],['D143',1556,758],['D143',1689,758],['D120',1335,823],['D86',1711,870],['N4A',1540,936],['A4',1745,974],['A4',1219,1071],['D138',1259,1181],['D6',1349,1176],['D19',1413,1173]
];
const shieldWidth = {2: 38, 3: 49, 4: 60, 6: 80};
const sg = document.getElementById('shields');
for (const [t, x, y] of shields) {
  const w = shieldWidth[t.length];
  add(sg, 'rect', {x: x - w / 2, y: y - 13, width: w, height: 26, class: 'fill-[#757575] stroke-[#666] stroke-[2px]'});
  add(sg, 'text', {x, y: y + 7, 'text-anchor': 'middle', class: t[0] === 'D'
    ? "font-['Roboto',sans-serif] text-[20px] fill-[#2b2b2b]"
    : "font-['Roboto',sans-serif] text-[20px] font-bold fill-[#b5b5b5]"}, t);
}

// pins: glyph, tip x, tip y, lit
const glyphs = {
  bag: 'M-8-3H8V10H-8ZM-4-3V-7A4 4 0 0 1 4-7V-3H2V-7A2 2 0 0 0-2-7V-3Z',
  hosp: 'M-8-11H-5V-2H5V-11H8V11H5V2H-5V11H-8Z',
  museum: 'M-10-4L0-11L10-4V-2H-10ZM-8 0H-5V8H-8ZM-1.500 0H1.500V8H-1.500ZM5 0H8V8H5ZM-11 9H11V12H-11Z',
  cross: 'M-1.500-13H1.500V-6H8V-3H1.500V12H-1.500V-3H-8V-6H-1.500Z',
  spire: 'M0-14L2 4H4V8H7V11H-7V8H-4V4H-2Z',
  note: 'M-3-10L7-12V6A4 4 0 1 1 4 3V-6L0-5V9A4 4 0 1 1-3 6Z',
  rook: 'M-9-11H-5V-8H-2V-11H2V-8H5V-11H9V-4H5L6 6H9V11H-9V6H-6L-5-4H-9Z',
  cap: 'M-13-4L0-10L13-4V5H11V-2L0 3ZM-8 2L0 6L8 2V7Q0 13-8 7Z',
  dot: 'M-6 0A6 6 0 1 1 6 0A6 6 0 1 1-6 0Z',
  tree: 'M0-14L6-4H4L8 3H5L9 9H1V13H-1V9H-9L-5 3H-8L-4-4H-6Z',
  camera: 'M-12-6H-5L-3-9H5L7-6H12V9H-12ZM0-3A4 4 0 1 0 .1-3Z',
  flower: 'M0-1L-3-7L0-12L3-7ZM-1 0L-8 0L-12-5L-6-6ZM1 0L8 0L12-5L6-6ZM-1 2L-3 8L-9 11L-7 5ZM1 2L3 8L9 11L7 5Z',
  paw: 'M-9-3A3 4 0 1 1-8.900-3ZM-3-6A3 4 0 1 1-2.900-6ZM5-6A3 4 0 1 1 5.100-6ZM11-3A3 4 0 1 1 11.100-3ZM0-1Q8 4 7 10H-7Q-8 4 0-1Z',
  ball: 'M-13-5L-8-8L-4-2L4-5L9 0V8Q0 12-9 8ZM4-10L8-12L9-8Z'
};
const pins = [
  ['bag',132,234,1],['rook',74,118,1],['cap',29,273,1],['bag',751,58,1],['cross',839,438,1],['hosp',85,589,1],['spire',539,561,0],['museum',636,545,0],['note',769,577,0],['museum',661,635,0],['museum',736,691,0],['museum',805,685,0],['rook',536,707,0],['dot',278,825,0],['tree',412,871,0],['spire',861,822,0],['museum',268,1122,0],
  ['ball',947,77,0],['hosp',1346,172,1],['hosp',1749,219,1],['bag',1054,327,1],['museum',1294,507,1],['bag',1682,461,1],['hosp',1529,524,1],['camera',1003,755,0],['flower',951,851,0],['paw',1286,944,0],['museum',1336,1143,0],['hosp',908,1167,1]
];
const pg = document.getElementById('pins');
for (const [g, x, y, lit] of pins) {
  const p = add(pg, 'g', {transform: `translate(${x} ${y - 41})`});
  add(p, 'path', {d: 'M0 41Q-3 27-12 17A21 21 0 1 1 12 17Q3 27 0 41Z', class: lit ? 'fill-[#7a7a7a]' : 'fill-[#4d4d4d]'});
  add(p, 'path', {d: glyphs[g], class: 'fill-black'});
}

// labels: style, x, baseline, text, rotation
const styles = {
  t: "font-['Roboto',sans-serif] text-[32px] fill-[#b2b2b2] stroke-[#0f1014] stroke-[5px] [paint-order:stroke]",
  m: "font-['Roboto',sans-serif] text-[35px] font-medium fill-[#c4c4c4] stroke-[#0f1014] stroke-[5px] [paint-order:stroke]",
  s: "font-['Roboto',sans-serif] text-[28px] fill-[#a8a8a8] stroke-[#0f1014] stroke-[5px] [paint-order:stroke]",
  p: "font-['Roboto',sans-serif] text-[30px] fill-[#868686] stroke-black stroke-[5px] [paint-order:stroke]",
  c: "font-['Roboto',sans-serif] text-[20px] font-medium tracking-[2px] fill-[#6e6e6e] stroke-[#0f1014] stroke-[5px] [paint-order:stroke]",
  a: "font-['Roboto',sans-serif] text-[34px] font-medium tracking-[2px] fill-[#bdbdbd] stroke-[#0f1014] stroke-[5px] [paint-order:stroke]",
  b: "font-['Roboto',sans-serif] text-[44px] font-medium tracking-[2px] fill-[#d0d0d0] stroke-[#0f1014] stroke-[5px] [paint-order:stroke]",
  r: "font-['Roboto',sans-serif] text-[22px] font-medium fill-[#6e6e6e] stroke-[#0f1014] stroke-[4px] [paint-order:stroke]",
  d: "font-['Roboto',sans-serif] text-[22px] fill-[#4c4c4c] stroke-[#0f1014] stroke-[4px] [paint-order:stroke]"
};
const labels = [
  ['t',205,112,'Colombes'],['s',447,76,'Gennevilliers'],['p',631,38,'Qwartz'],['c',344,39,'LES MOURINOUX'],['r',152,74,'HAUTS-DE-SEINE',-39],['r',152,19,"VAL-D'OISE",-42],['s',-2,99,'ons'],['p',159,215,'Conforama Colombes'],['s',714,206,'Saint-Ouen'],['t',557,277,'Clichy'],['t',235,314,'Courbevoie'],['t',384,385,'Levallois-Perret'],['p',788,292,'Leroy Merlin Paris'],['p',823,321,'19 - Rosa Parks'],['p',-2,304,'iversité'],['p',9,335,'Nanterre'],['m',-3,391,'anterre'],['p',656,419,'Sacré-Cœur'],['s',143,463,'Puteaux'],['p',340,475,'Musée Jacquemart-André'],
  ['p',291,542,'Arc de Triomphe'],['p',-3,569,'Foch'],['p',795,557,'Palais Garnier'],['p',485,614,'Petit Palais'],['r',90,666,'HAUTS-DE-SEINE',-52],['r',168,650,'PARIS',-54],['p',202,668,'Bois de'],['p',190,699,'Boulogne'],['p',371,687,'Tour Eiffel'],['p',588,724,"Musée d'Orsay"],['p',833,665,'Musée du Louvre'],['p',230,756,'Stade Roland Garros'],['b',843,736,'Paris'],['p',707,803,'Panthéon'],['s',-4,817,'Cloud'],['p',501,838,'Parc'],['p',440,868,'André-Citroën'],['m',26,896,'Boulogne-Billancourt'],['c',668,892,'MONTPARNASSE'],['t',269,1039,'Issy-les-Moulineaux'],['s',0,1067,'vres'],['p',68,1102,'Musée Rodin'],['s',134,1145,'Meudon'],['d',624,1010,'Bd Brune',18],['d',737,1050,'Bd Jourdan',16],['s',611,1115,'Montrouge'],
  ['s',1106,14,'La Courneuve'],['p',974,58,'Stade de France'],['t',1435,89,'Drancy'],['p',1374,153,'Hôpital Avicenne AP-HP'],['t',1008,202,'Aubervilliers'],['t',1387,238,'Bobigny'],['s',1671,261,'Bondy'],['p',1069,385,'La Villette'],['t',1211,372,'Pantin'],['s',1486,390,'Noisy-le-Sec'],['p',1134,436,'Mairie des Lilas'],['p',1415,440,'Westfield Rosny 2'],['p',1030,491,'Parc des'],['p',972,521,'Buttes-Chaumont'],['s',1632,550,'Rosny-sous-Bois'],['s',1288,600,'Bagnolet'],
  ['a',1096,653,'20TH ARR.'],['t',1432,664,'Montreuil'],['p',1030,736,'Place de la Bastille'],['s',1379,815,'Vincennes'],['c',1663,834,'LES MARONITES'],['p',1237,874,'Parc zoologique de Paris'],['p',880,883,'Jardin des'],['p',901,913,'Plantes'],['a',1327,937,'12TH ARR.'],['p',1354,993,'Bois de'],['p',1333,1023,'Vincennes'],['r',1590,991,'PARIS',-75],['r',1618,1056,'VAL-DE-MARNE',-76],['a',854,1023,'13TH ARR.'],['p',1695,1015,'Parc'],['p',1684,1046,'Tremblay'],['r',983,1085,'PARIS',-30],['r',948,1136,'VAL-DE-MARNE',-28],['t',1026,1148,'Ivry-sur-Seine'],['p',857,1198,'Hôpital Bicêtre AP-HP'],['p',1363,1109,'Musée Fragonard de'],['p',1363,1139,"l'École vétérinaire de..."]
];
const lg = document.getElementById('labels');
for (const [s, x, y, t, rot] of labels) {
  const attrs = {x, y, class: styles[s]};
  if (rot) attrs.transform = `rotate(${rot} ${x} ${y})`;
  add(lg, 'text', attrs, t);
}
</script>
</body>
</html>
